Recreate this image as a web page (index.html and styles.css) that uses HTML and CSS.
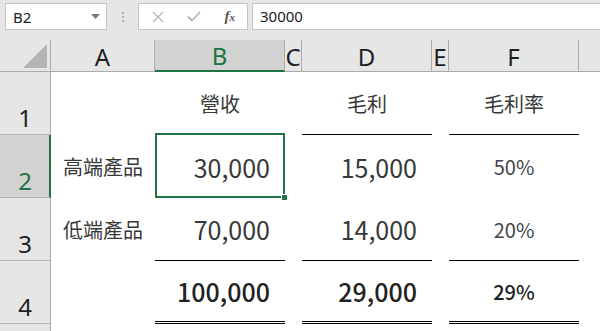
FILE: index.html
```html
<!DOCTYPE html>
<html lang="zh-Hant">
<head>
<meta charset="utf-8">
<title>Sheet</title>
<link rel="stylesheet" href="styles.css">
</head>
<body>
<div class="app">
  <div class="toolbar">
    <div class="namebox">
      <span class="ref">B2</span>
      <svg class="caret" width="9" height="5" viewBox="0 0 9 5"><polygon points="0,0 9,0 4.5,5" fill="#7a7a7a"/></svg>
    </div>
    <div class="grip"><i></i><i></i><i></i></div>
    <div class="fnbox">
      <svg class="ico" width="12" height="12" viewBox="0 0 12 12"><path d="M1 1 L11 11 M11 1 L1 11" stroke="#b8b8b8" stroke-width="1.4" fill="none"/></svg>
      <svg class="ico" width="14" height="11" viewBox="0 0 14 11"><path d="M1 5.5 L5 9.5 L13 1" stroke="#b8b8b8" stroke-width="1.8" fill="none"/></svg>
      <span class="fx">f<small>x</small></span>
    </div>
    <div class="formula">30000</div>
  </div>

  <div class="sheet">
    <div class="corner"><svg width="51" height="31" viewBox="0 0 51 31"><polygon points="23,28 47,28 47,4" fill="#b4b4b4"/></svg></div>
    <div class="colhdr">A</div>
    <div class="colhdr active">B</div>
    <div class="colhdr">C</div>
    <div class="colhdr">D</div>
    <div class="colhdr">E</div>
    <div class="colhdr">F</div>
    <div class="colhdr last"></div>

    <div class="rowhdr">1</div>
    <div class="cell"></div>
    <div class="cell center line">營收</div>
    <div class="cell"></div>
    <div class="cell center line">毛利</div>
    <div class="cell"></div>
    <div class="cell center line">毛利率</div>
    <div class="cell"></div>

    <div class="rowhdr active">2</div>
    <div class="cell center label">高端產品</div>
    <div class="cell num selected">30,000<span class="handle"></span></div>
    <div class="cell"></div>
    <div class="cell num">15,000</div>
    <div class="cell"></div>
    <div class="cell center pct">50%</div>
    <div class="cell"></div>

    <div class="rowhdr">3</div>
    <div class="cell center label">低端產品</div>
    <div class="cell num line">70,000</div>
    <div class="cell"></div>
    <div class="cell num line">14,000</div>
    <div class="cell"></div>
    <div class="cell center pct line">20%</div>
    <div class="cell"></div>

    <div class="rowhdr">4</div>
    <div class="cell"></div>
    <div class="cell num total dbl">100,000</div>
    <div class="cell"></div>
    <div class="cell num total dbl">29,000</div>
    <div class="cell"></div>
    <div class="cell center pct total dbl">29%</div>
    <div class="cell"></div>

    <div class="rowhdr tail"></div>
    <div class="cell"></div><div class="cell"></div><div class="cell"></div><div class="cell"></div><div class="cell"></div><div class="cell"></div><div class="cell"></div>
  </div>
</div>
</body>
</html>
```

FILE: styles.css
```css
* { box-sizing: border-box; }
html, body { margin: 0; padding: 0; }
body {
  width: 600px;
  height: 331px;
  overflow: hidden;
  background: #fff;
  font-family: "Noto Sans", "Open Sans", "Noto Sans CJK TC", sans-serif;
}
.app { width: 600px; height: 331px; display: flex; flex-direction: column; }

.toolbar {
  height: 40px;
  flex: none;
  background: #e6e6e6;
  display: flex;
  align-items: flex-start;
  padding: 3px 0 0 5px;
}
.namebox {
  width: 102px;
  height: 27px;
  background: #fff;
  border: 1px solid #c6c6c6;
  display: flex;
  align-items: center;
  justify-content: space-between;
  padding: 0 6px 0 7px;
  font-size: 15px;
  color: #222;
}
.grip {
  width: 31px;
  height: 27px;
  display: flex;
  flex-direction: column;
  align-items: center;
  justify-content: center;
  gap: 2px;
}
.grip i { width: 2px; height: 2px; background: #b0b0b0; display: block; }
.fnbox {
  width: 110px;
  height: 27px;
  background: #fff;
  border: 1px solid #c6c6c6;
  display: flex;
  align-items: center;
  padding: 0 12px 0 13px;
  justify-content: space-between;
}
.fx {
  font-family: "Liberation Serif", serif;
  font-style: italic;
  font-size: 15px;
  color: #555;
  font-weight: bold;
}
.fx small { font-size: 11px; }
.formula {
  flex: 1;
  margin-left: 4px;
  height: 27px;
  background: #fff;
  border: 1px solid #c6c6c6;
  border-right: none;
  padding-left: 7px;
  font-size: 15px;
  line-height: 25px;
  color: #222;
}

.sheet {
  flex: 1;
  display: grid;
  grid-template-columns: 51px 104px 130px 17px 130px 17px 130px 1fr;
  grid-template-rows: 32px repeat(4, 63px) 1fr;
}
.corner {
  background: #e6e6e6;
  border-right: 1px solid #ababab;
  border-bottom: 1px solid #ababab;
}
.corner svg { display: block; }
.colhdr {
  background: #e6e6e6;
  border-right: 1px solid #ababab;
  border-bottom: 1px solid #ababab;
  display: flex;
  align-items: center;
  justify-content: center;
  font-size: 24px;
  color: #1e1e1e;
  padding-top: 1px;
}
.colhdr.last { border-right: none; }
.colhdr.active {
  background: #d2d2d2;
  color: #217346;
  border-bottom: 2px solid #217346;
}
.rowhdr {
  background: #e6e6e6;
  border-right: 1px solid #ababab;
  border-bottom: 1px solid #b4b4b4;
  display: flex;
  align-items: flex-end;
  justify-content: center;
  font-size: 24px;
  line-height: 1;
  padding-bottom: 4px;
  color: #1e1e1e;
}
.rowhdr.active {
  background: #d2d2d2;
  color: #217346;
  border-right: 2px solid #217346;
  padding-left: 1px;
}
.rowhdr.tail { border-bottom: none; }

.cell {
  display: flex;
  align-items: center;
  color: #383838;
  font-family: "Noto Sans CJK TC", "Noto Sans", sans-serif;
  font-size: 20px;
}
.center { justify-content: center; }
.label { font-size: 20px; }
.num {
  justify-content: flex-end;
  padding-right: 15px;
  font-size: 25px;
}
.pct { font-size: 20px; color: #444; }
.total { font-weight: 500; color: #222; }
.line { border-bottom: 1px solid #000; }
.dbl { border-bottom: 3px double #000; }

.selected { position: relative; }
.selected::before {
  content: "";
  position: absolute;
  top: -2px;
  left: 0;
  right: 0;
  bottom: 0;
  border: 2px solid #217346;
}
.handle {
  position: absolute;
  right: -3px;
  bottom: -3px;
  width: 7px;
  height: 7px;
  background: #217346;
  border: 1px solid #fff;
}
```
